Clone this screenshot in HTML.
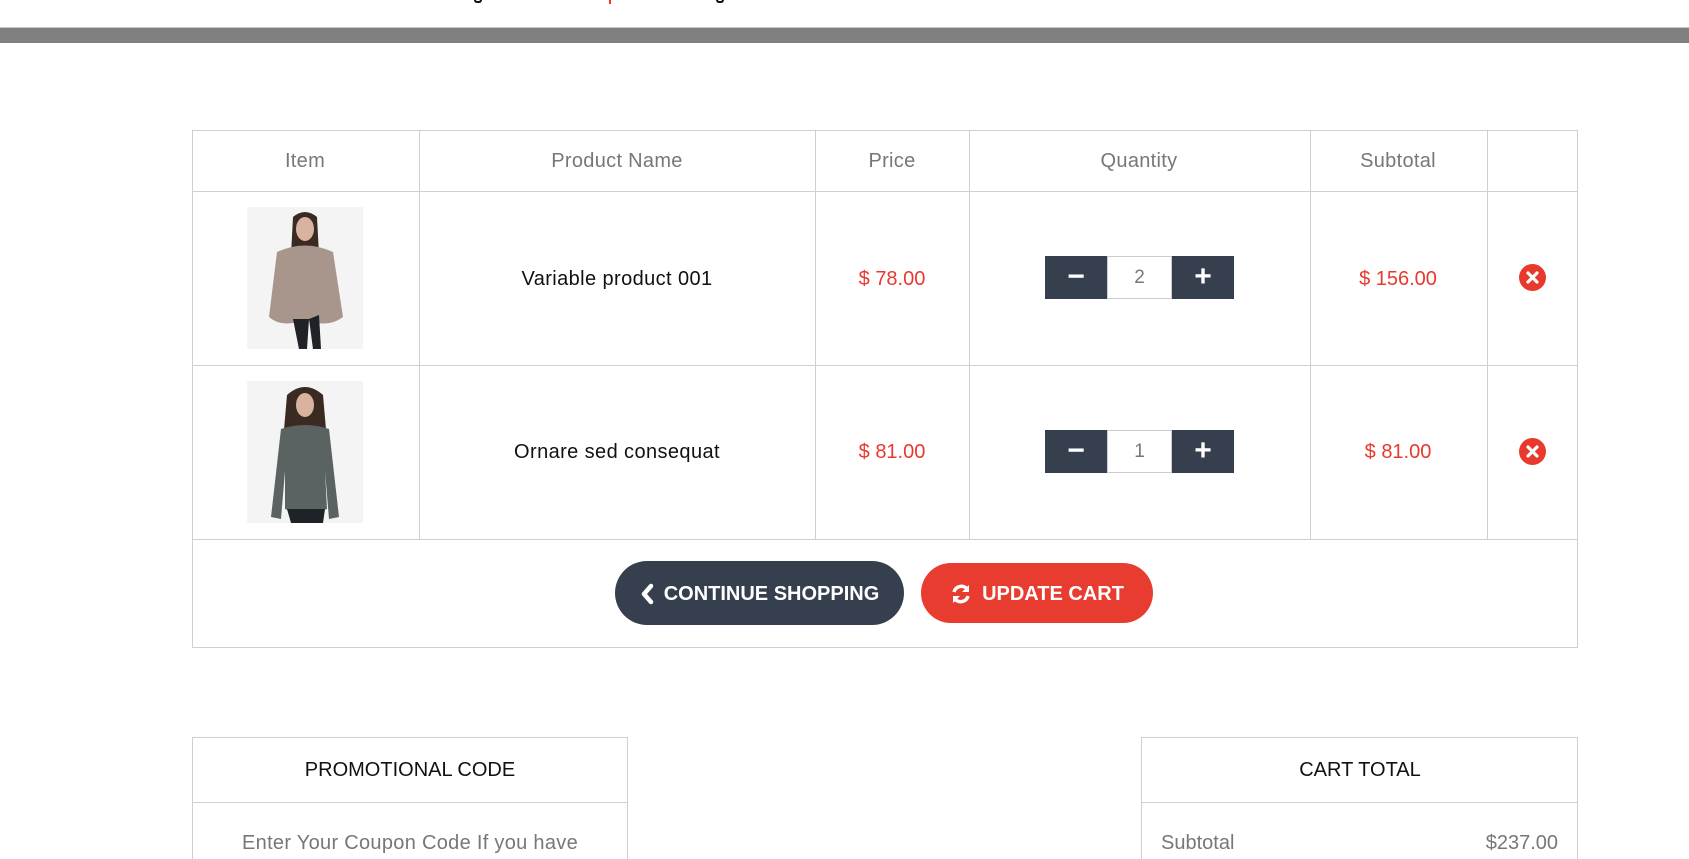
<!DOCTYPE html>
<html><head><meta charset="utf-8"><style>
*{margin:0;padding:0;box-sizing:border-box}
html,body{width:1689px;height:859px;overflow:hidden}
body{background:#fff;font-family:"Liberation Sans",sans-serif;position:relative}
.a{position:absolute}
.bar{left:0;top:27px;width:1689px;height:16px;background:#808080;border-top:1px solid #c8c8c8}
.ln{background:#cfcfcf}
.c{position:absolute;text-align:center;transform:translateX(-50%);white-space:nowrap}
.h{color:#777;font-size:20px;letter-spacing:0.3px}
.nm{color:#111;font-size:20px;letter-spacing:0.4px}
.pr{color:#e8392e;font-size:20px}
.q{position:absolute;width:189px;height:43px}
.q .m,.q .p{position:absolute;top:0;width:62px;height:43px;background:#363f4d;color:#fff;font-size:30px;font-weight:bold;text-align:center;line-height:42px}
.q .m{left:0}.q .p{right:0}
.q .v{position:absolute;left:62px;top:0;width:65px;height:43px;border:1px solid #ccc;color:#777;text-align:center;line-height:41px;font-size:19px}
.x{position:absolute;width:27px;height:27px;border-radius:50%;background:#e8392e}
.btn{position:absolute;border-radius:34px;color:#fff;font-weight:bold;font-size:20px;display:flex;align-items:center;justify-content:center;gap:10px;padding-top:2px}
.box{position:absolute;top:737px;height:122px;border:1px solid #cfcfcf;border-bottom:none}
</style></head><body>
<div class="a" style="left:474px;top:0;width:8px;height:3px;border:2px solid #111;border-top:none;border-radius:0 0 4px 4px"></div>
<div class="a" style="left:609px;top:0;width:2px;height:4px;background:#e8392e"></div>
<div class="a" style="left:716px;top:0;width:8px;height:3px;border:2px solid #111;border-top:none;border-radius:0 0 4px 4px"></div>
<div class="a bar"></div>

<div class="a" style="left:192px;top:130px;width:1386px;height:518px;border:1px solid #cfcfcf"></div>
<div class="a ln" style="left:192px;top:191px;width:1386px;height:1px"></div>
<div class="a ln" style="left:192px;top:365px;width:1386px;height:1px"></div>
<div class="a ln" style="left:192px;top:539px;width:1386px;height:1px"></div>
<div class="a ln" style="left:419px;top:130px;width:1px;height:410px"></div>
<div class="a ln" style="left:815px;top:130px;width:1px;height:410px"></div>
<div class="a ln" style="left:969px;top:130px;width:1px;height:410px"></div>
<div class="a ln" style="left:1310px;top:130px;width:1px;height:410px"></div>
<div class="a ln" style="left:1487px;top:130px;width:1px;height:410px"></div>

<div class="c h" style="left:305px;top:150px">Item</div>
<div class="c h" style="left:617px;top:150px">Product Name</div>
<div class="c h" style="left:892px;top:150px">Price</div>
<div class="c h" style="left:1139px;top:150px">Quantity</div>
<div class="c h" style="left:1398px;top:150px">Subtotal</div>

<svg class="a" style="left:247px;top:207px" width="116" height="142" viewBox="0 0 116 142">
<rect width="116" height="142" fill="#f4f4f4"/>
<path d="M46 10 Q58 0 70 10 L72 48 L44 48 Z" fill="#3a2a22"/>
<ellipse cx="58" cy="22" rx="9" ry="12" fill="#d9b3a0"/>
<path d="M30 45 Q58 32 86 45 L96 110 Q80 122 58 112 Q36 122 22 110 Z" fill="#a8968c"/>
<path d="M46 112 L52 142 L60 142 L62 112 Z M62 112 L66 142 L74 142 L72 108 Z" fill="#1f2226"/>
</svg>
<svg class="a" style="left:247px;top:381px" width="116" height="142" viewBox="0 0 116 142">
<rect width="116" height="142" fill="#f4f4f4"/>
<path d="M40 14 Q58 -2 76 14 L80 60 L36 60 Z" fill="#3a2a22"/>
<ellipse cx="58" cy="24" rx="9" ry="12" fill="#d9b3a0"/>
<path d="M34 48 Q58 40 82 48 L92 136 L82 138 L78 90 L80 128 Q58 136 38 128 L38 90 L34 138 L24 136 Z" fill="#5a6262"/>
<path d="M40 128 L44 142 L76 142 L78 128 Z" fill="#1f2226"/>
</svg>

<div class="c nm" style="left:617px;top:268px">Variable product 001</div>
<div class="c nm" style="left:617px;top:441px">Ornare sed consequat</div>
<div class="c pr" style="left:892px;top:268px">$ 78.00</div>
<div class="c pr" style="left:892px;top:441px">$ 81.00</div>
<div class="c pr" style="left:1398px;top:268px">$ 156.00</div>
<div class="c pr" style="left:1398px;top:441px">$ 81.00</div>

<div class="q" style="left:1045px;top:256px"><div class="m">−</div><div class="v">2</div><div class="p">+</div></div>
<div class="q" style="left:1045px;top:430px"><div class="m">−</div><div class="v">1</div><div class="p">+</div></div>

<svg class="x" style="left:1519px;top:264px" viewBox="0 0 27 27"><path d="M9 9 L18 18 M18 9 L9 18" stroke="#fff" stroke-width="3.2" stroke-linecap="round"/></svg>
<svg class="x" style="left:1519px;top:438px" viewBox="0 0 27 27"><path d="M9 9 L18 18 M18 9 L9 18" stroke="#fff" stroke-width="3.2" stroke-linecap="round"/></svg>

<div class="btn" style="left:615px;top:561px;width:289px;height:64px;background:#363f4d">
<svg width="14" height="22" viewBox="0 0 14 22"><path d="M11 3 L4 11 L11 19" stroke="#fff" stroke-width="4.5" fill="none" stroke-linecap="round" stroke-linejoin="round"/></svg>
<span>CONTINUE SHOPPING</span></div>
<div class="btn" style="left:921px;top:563px;width:232px;height:60px;background:#e93c31">
<svg width="22" height="22" viewBox="0 0 22 22"><path d="M4 9 A7.5 7.5 0 0 1 17 6" stroke="#fff" stroke-width="3.5" fill="none"/><path d="M19 2 L19 9 L12 9 Z" fill="#fff"/><path d="M18 13 A7.5 7.5 0 0 1 5 16" stroke="#fff" stroke-width="3.5" fill="none"/><path d="M3 20 L3 13 L10 13 Z" fill="#fff"/></svg>
<span>UPDATE CART</span></div>

<div class="box" style="left:192px;width:436px"></div>
<div class="a ln" style="left:192px;top:802px;width:436px;height:1px"></div>
<div class="c" style="left:410px;top:759px;font-size:20px;color:#111">PROMOTIONAL CODE</div>
<div class="c" style="left:410px;top:832px;font-size:20px;color:#777;letter-spacing:0.3px">Enter Your Coupon Code If you have</div>

<div class="box" style="left:1141px;width:437px"></div>
<div class="a ln" style="left:1141px;top:802px;width:437px;height:1px"></div>
<div class="c" style="left:1360px;top:759px;font-size:20px;color:#111">CART TOTAL</div>
<div class="a" style="left:1161px;top:832px;font-size:20px;color:#777">Subtotal</div>
<div class="a" style="right:131px;top:832px;font-size:20px;color:#777">$237.00</div>
</body></html>
